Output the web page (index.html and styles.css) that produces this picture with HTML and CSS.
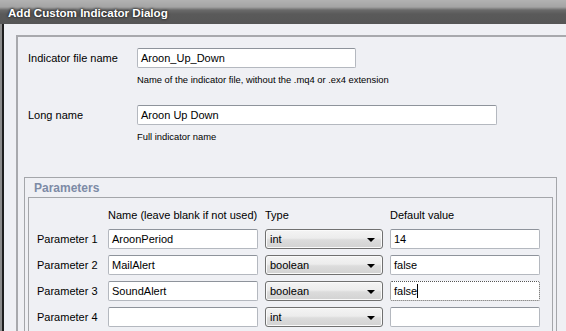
FILE: index.html
```html
<!DOCTYPE html>
<html lang="en">
<head>
  <meta charset="UTF-8">
  <title>Add Custom Indicator Dialog</title>
  <link rel="stylesheet" href="styles.css">
</head>
<body>
  <div class="titlebar">Add Custom Indicator Dialog</div>
  <div class="frame">
    <div class="panel">
      <div class="field">
        <label>Indicator file name</label>
        <div class="input short">Aroon_Up_Down</div>
        <div class="help">Name of the indicator file, without the .mq4 or .ex4 extension</div>
      </div>
      <div class="field">
        <label>Long name</label>
        <div class="input long">Aroon Up Down</div>
        <div class="help">Full indicator name</div>
      </div>

      <div class="group">
        <div class="group-title">Parameters</div>
        <div class="group-body">
          <div class="params">
            <span></span>
            <span class="head">Name (leave blank if not used)</span>
            <span class="head">Type</span>
            <span class="head">Default value</span>

            <span class="plabel">Parameter 1</span>
            <div class="input">AroonPeriod</div>
            <div class="select">int</div>
            <div class="input">14</div>

            <span class="plabel">Parameter 2</span>
            <div class="input">MailAlert</div>
            <div class="select">boolean</div>
            <div class="input">false</div>

            <span class="plabel">Parameter 3</span>
            <div class="input">SoundAlert</div>
            <div class="select">boolean</div>
            <div class="input focused">false<span class="caret"></span></div>

            <span class="plabel">Parameter 4</span>
            <div class="input"></div>
            <div class="select">int</div>
            <div class="input"></div>
          </div>
        </div>
      </div>
    </div>
  </div>
</body>
</html>
```

FILE: styles.css
```css
body {
  margin: 0;
  background: #eff0f4;
  font-family: 'Liberation Sans', Arial, sans-serif;
  font-size: 11px;
  color: #000;
  overflow: hidden;
  height: 331px;
}

.titlebar {
  height: 24px;
  line-height: 26px;
  padding-left: 8px;
  box-sizing: border-box;
  background: linear-gradient(#b2b2b2 0, #a4a4a4 7px, #6a6a6a 10px, #5a5a5a 14px, #565656 24px);
  color: #fff;
  font-weight: bold;
  font-size: 11.6px;
  text-shadow: 0 0 3px #222, 0 0 2px #222;
}

/* window edge: gray outer line, dark inner line */
.frame {
  position: relative;
  display: flex;
  height: 307px;
  box-sizing: border-box;
  border-left: 2px solid #8c8c8c;
  padding-top: 11px;
  padding-left: 14px;
}

.frame::after {
  content: '';
  position: absolute;
  left: 0;
  top: 0;
  bottom: 0;
  width: 2px;
  background: #1f1f1f;
}

.panel {
  flex: 1;
  border-top: 2px solid #a8a9ad;
  border-left: 2px solid #a8a9ad;
  padding: 11px 9px 0 6px;
}

.field {
  display: grid;
  grid-template-columns: 109px 1fr;
  align-items: center;
  padding-left: 4px;
  margin-bottom: 19px;
}

.field:nth-child(2) {
  margin-bottom: 34px;
}

.help {
  grid-column: 2;
  font-size: 9.4px;
  line-height: 12px;
  margin-top: 6px;
}

.input {
  height: 20px;
  box-sizing: border-box;
  background: #fff;
  border: 1px solid #b4b8bf;
  border-top-color: #8e939b;
  border-radius: 2px;
  padding: 0 3px;
  line-height: 18px;
  white-space: nowrap;
}

.input.short { width: 219px; }
.input.long { width: 360px; }

.input.focused {
  border: 1px dotted #555;
  box-shadow: inset 0 0 0 1px #fff;
}

.caret {
  display: inline-block;
  width: 1px;
  height: 14px;
  background: #000;
  vertical-align: -3px;
}

.group {
  border: 1px solid #a4a6aa;
  border-bottom: none;
  height: 160px;
}

.group-title {
  font-weight: bold;
  font-size: 12px;
  line-height: 14px;
  color: #7d8ba6;
  padding: 3px 0 2px 9px;
}

.group-body {
  margin: 0 3px;
  border: 1px solid #a4a6aa;
  border-bottom: none;
  height: 140px;
  padding: 11px 0 0 8px;
  box-sizing: border-box;
}

.params {
  display: grid;
  grid-template-columns: 64px 150px 118px 150px;
  column-gap: 7px;
  row-gap: 6px;
  align-items: center;
}

.head {
  line-height: 13px;
  margin-bottom: 1px;
}

.select {
  position: relative;
  height: 20px;
  box-sizing: border-box;
  border: 1px solid #707070;
  border-radius: 3px;
  padding: 0 4px;
  line-height: 18px;
  background: linear-gradient(#f4f4f4 0, #ececec 45%, #dcdcdc 55%, #d2d2d2 100%);
  box-shadow: inset 0 0 0 1px #fafafa;
}

.select::after {
  content: '';
  position: absolute;
  right: 7px;
  top: 8px;
  border-left: 4px solid transparent;
  border-right: 4px solid transparent;
  border-top: 4px solid #000;
}
```
